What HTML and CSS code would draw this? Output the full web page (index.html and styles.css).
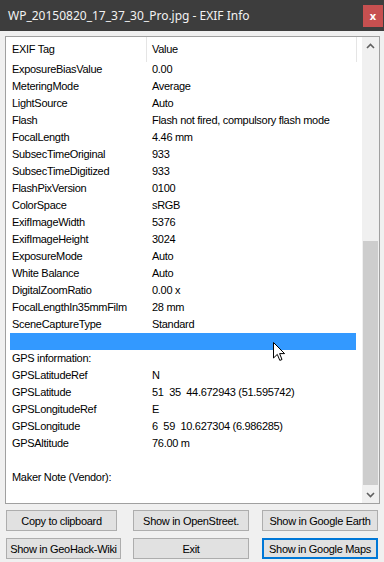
FILE: index.html
```html
<!DOCTYPE html>
<html>
<head>
    <meta charset="UTF-8">
    <link rel="stylesheet" href="styles.css">
</head>
<body>
<div class="window">
    <div class="titlebar">
        <span class="title">WP_20150820_17_37_30_Pro.jpg - EXIF Info</span>
        <span class="close">x</span>
    </div>

    <div class="listbox">
        <div class="list">
            <div class="header">
                <div class="hcol htag">EXIF Tag</div>
                <div class="hcol hval">Value</div>
            </div>
            <div class="row"><span class="tag">ExposureBiasValue</span><span class="val">0.00</span></div>
            <div class="row"><span class="tag">MeteringMode</span><span class="val">Average</span></div>
            <div class="row"><span class="tag">LightSource</span><span class="val">Auto</span></div>
            <div class="row"><span class="tag">Flash</span><span class="val">Flash not fired, compulsory flash mode</span></div>
            <div class="row"><span class="tag">FocalLength</span><span class="val">4.46 mm</span></div>
            <div class="row"><span class="tag">SubsecTimeOriginal</span><span class="val">933</span></div>
            <div class="row"><span class="tag">SubsecTimeDigitized</span><span class="val">933</span></div>
            <div class="row"><span class="tag">FlashPixVersion</span><span class="val">0100</span></div>
            <div class="row"><span class="tag">ColorSpace</span><span class="val">sRGB</span></div>
            <div class="row"><span class="tag">ExifImageWidth</span><span class="val">5376</span></div>
            <div class="row"><span class="tag">ExifImageHeight</span><span class="val">3024</span></div>
            <div class="row"><span class="tag">ExposureMode</span><span class="val">Auto</span></div>
            <div class="row"><span class="tag">White Balance</span><span class="val">Auto</span></div>
            <div class="row"><span class="tag">DigitalZoomRatio</span><span class="val">0.00 x</span></div>
            <div class="row"><span class="tag">FocalLengthIn35mmFilm</span><span class="val">28 mm</span></div>
            <div class="row"><span class="tag">SceneCaptureType</span><span class="val">Standard</span></div>
            <div class="row selected"><span class="tag"></span><span class="val"></span></div>
            <div class="row"><span class="tag">GPS information:</span><span class="val"></span></div>
            <div class="row"><span class="tag">GPSLatitudeRef</span><span class="val">N</span></div>
            <div class="row"><span class="tag">GPSLatitude</span><span class="val">51&nbsp; 35&nbsp; 44.672943 (51.595742)</span></div>
            <div class="row"><span class="tag">GPSLongitudeRef</span><span class="val">E</span></div>
            <div class="row"><span class="tag">GPSLongitude</span><span class="val">6&nbsp; 59&nbsp; 10.627304 (6.986285)</span></div>
            <div class="row"><span class="tag">GPSAltitude</span><span class="val">76.00 m</span></div>
            <div class="row"><span class="tag"></span><span class="val"></span></div>
            <div class="row"><span class="tag">Maker Note (Vendor):</span><span class="val"></span></div>
            <div class="row"><span class="tag"></span><span class="val"></span></div>
        </div>
        <div class="scrollbar">
            <div class="sb-arrow">
                <svg width="9" height="6" viewBox="0 0 9 6"><polyline points="1,5 4.5,1.5 8,5" fill="none" stroke="#606060" stroke-width="1.6"/></svg>
            </div>
            <div class="sb-track"><div class="sb-thumb"></div></div>
            <div class="sb-arrow">
                <svg width="9" height="6" viewBox="0 0 9 6"><polyline points="1,1 4.5,4.5 8,1" fill="none" stroke="#606060" stroke-width="1.6"/></svg>
            </div>
        </div>
    </div>

    <div class="buttons">
        <div class="btn btn-short">Copy to clipboard</div>
        <div class="btn">Show in OpenStreet.</div>
        <div class="btn">Show in Google Earth</div>
        <div class="btn">Show in GeoHack-Wiki</div>
        <div class="btn">Exit</div>
        <div class="btn btn-default">Show in Google Maps</div>
    </div>

    <svg class="pointer" width="13" height="20" viewBox="0 0 13 20">
        <path d="M0.5,0.5 L0.5,16 L4.3,12.4 L6.8,18.4 L9,17.5 L6.6,11.6 L11.6,11.6 Z" fill="#fff" stroke="#000" stroke-width="1" stroke-linejoin="round"/>
    </svg>
</div>
</body>
</html>
```

FILE: styles.css
```css
body { margin: 0; font-family: "Liberation Sans", Arial, sans-serif; font-size: 11px; letter-spacing: -0.3px; color: #000; }
.window { position: relative; width: 384px; height: 562px; background: #f0f0f0; display: flex; flex-direction: column; overflow: hidden; }

.titlebar { height: 31px; background: #3d3d3d; display: flex; align-items: center; justify-content: space-between; }
.title { font-family: "Noto Sans", sans-serif; font-size: 12px; letter-spacing: 0; color: #f2f2f2; padding-left: 8px; }
.close { width: 20px; height: 22px; margin-right: 1px; background: #c75050; color: #fff; font-family: "Noto Sans", sans-serif; font-size: 11px; font-weight: bold; letter-spacing: 0; display: flex; align-items: center; justify-content: center; }

.listbox { margin: 5px 0 0 5px; width: 375px; height: 468px; box-sizing: border-box; border: 1px solid #a0a0a0; background: #fff; display: flex; }
.list { flex: 1; overflow: hidden; }
.header { height: 24px; display: flex; }
.hcol { line-height: 24px; box-sizing: border-box; border-right: 1px solid #e5e5e5; height: 25px; }
.htag { width: 141px; padding-left: 6px; }
.hval { width: 210px; padding-left: 5px; }

.row { height: 17px; line-height: 17px; margin-left: 4px; width: 346px; display: flex; white-space: nowrap; }
.tag { width: 142px; padding-left: 2px; box-sizing: border-box; flex-shrink: 0; }
.val { flex: 1; }
.selected { background: #3399ff; }

.scrollbar { width: 17px; background: #f0f0f0; display: flex; flex-direction: column; }
.sb-arrow { height: 17px; display: flex; align-items: center; justify-content: center; }
.sb-track { flex: 1; }
.sb-thumb { margin: 187px 1px 0 1px; height: 244px; background: #cdcdcd; }

.buttons { display: grid; grid-template-columns: 115px 116px 117px; grid-template-rows: 21px 21px; column-gap: 12px; row-gap: 7px; margin: 6px 0 0 6px; }
.buttons .btn:nth-child(3n) { margin-left: 1px; }
.btn { box-sizing: border-box; background: #e1e1e1; border: 1px solid #adadad; display: flex; align-items: center; justify-content: center; white-space: nowrap; }
.btn-short { width: 111px; }
.btn-default { border: 2px solid #0078d7; }

.pointer { position: absolute; left: 273px; top: 342px; }
```
